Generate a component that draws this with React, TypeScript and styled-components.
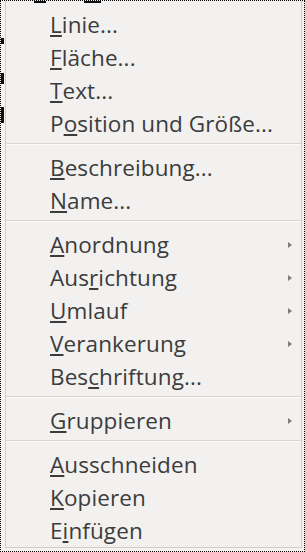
import styled, { createGlobalStyle } from 'styled-components'

type Entry =
  | { kind: 'item'; label: string; key: number; sub?: boolean }
  | { kind: 'sep' }

const entries: Entry[] = [
  { kind: 'item', label: 'Linie...', key: 0 },
  { kind: 'item', label: 'Fläche...', key: 0 },
  { kind: 'item', label: 'Text...', key: 0 },
  { kind: 'item', label: 'Position und Größe...', key: 1 },
  { kind: 'sep' },
  { kind: 'item', label: 'Beschreibung...', key: 0 },
  { kind: 'item', label: 'Name...', key: 0 },
  { kind: 'sep' },
  { kind: 'item', label: 'Anordnung', key: 0, sub: true },
  { kind: 'item', label: 'Ausrichtung', key: 3, sub: true },
  { kind: 'item', label: 'Umlauf', key: 0, sub: true },
  { kind: 'item', label: 'Verankerung', key: 0, sub: true },
  { kind: 'item', label: 'Beschriftung...', key: 3 },
  { kind: 'sep' },
  { kind: 'item', label: 'Gruppieren', key: 0, sub: true },
  { kind: 'sep' },
  { kind: 'item', label: 'Ausschneiden', key: 0 },
  { kind: 'item', label: 'Kopieren', key: 0 },
  { kind: 'item', label: 'Einfügen', key: 1 },
]

// bits of the window behind the menu that poke out at the edges
const marks = [
  { left: 0, top: 37, width: 3, height: 6 },
  { left: 0, top: 72, width: 3, height: 11 },
  { left: 0, top: 106, width: 3, height: 16 },
  { left: 33, top: 0, width: 12, height: 2 },
  { left: 83, top: 0, width: 17, height: 2 },
]

const App = () => {
  return (
    <>
      <GlobalStyle />
      <Frame>
        {marks.map((m, i) => (
          <Mark key={i} style={m} />
        ))}
        <Menu>
          {entries.map((e, i) =>
            e.kind === 'sep' ? (
              <Separator key={i} />
            ) : (
              <Item key={i}>
                <Label>
                  {e.label.slice(0, e.key)}
                  <Mnemonic>{e.label[e.key]}</Mnemonic>
                  {e.label.slice(e.key + 1)}
                </Label>
                {e.sub && <Arrow />}
              </Item>
            )
          )}
        </Menu>
      </Frame>
    </>
  )
}

const GlobalStyle = createGlobalStyle`
  html, body {
    margin: 0;
    padding: 0;
    background: #f4f3f2;
  }
`

const Frame = styled.div`
  position: relative;
  box-sizing: border-box;
  width: 305px;
  height: 552px;
  border: 1px dotted #000;
  background: #f4f3f2;
  padding: 0 2px 3px 4px;
  display: flex;
`

const Mark = styled.span`
  position: absolute;
  background: #111;
`

const Menu = styled.div`
  flex: 1;
  display: flex;
  flex-direction: column;
  background: #f2f1f0;
  border: 1px solid #cfccc9;
  border-top: none;
  padding-top: 7px;
  font-family: 'Open Sans', 'DejaVu Sans', sans-serif;
  font-size: 22.5px;
  letter-spacing: 0.1px;
  color: #3c3c3c;
`

const Item = styled.div`
  height: 33px;
  display: flex;
  align-items: center;
  justify-content: space-between;
  padding: 0 9px 0 44px;
`

const Label = styled.span`
  white-space: nowrap;
  line-height: 33px;
`

const Mnemonic = styled.span`
  text-decoration: underline;
  text-decoration-thickness: 1.5px;
  text-underline-offset: 2px;
`

const Arrow = styled.span`
  width: 0;
  height: 0;
  border-top: 3.5px solid transparent;
  border-bottom: 3.5px solid transparent;
  border-left: 4.5px solid #7d7d7d;
`

const Separator = styled.div`
  height: 11px;
  display: flex;
  flex-direction: column;
  padding-top: 3px;
  box-sizing: border-box;

  &::before {
    content: '';
    height: 1px;
    background: #d9d6d3;
  }
  &::after {
    content: '';
    height: 1px;
    background: #fbfbfa;
  }
`

export default App
